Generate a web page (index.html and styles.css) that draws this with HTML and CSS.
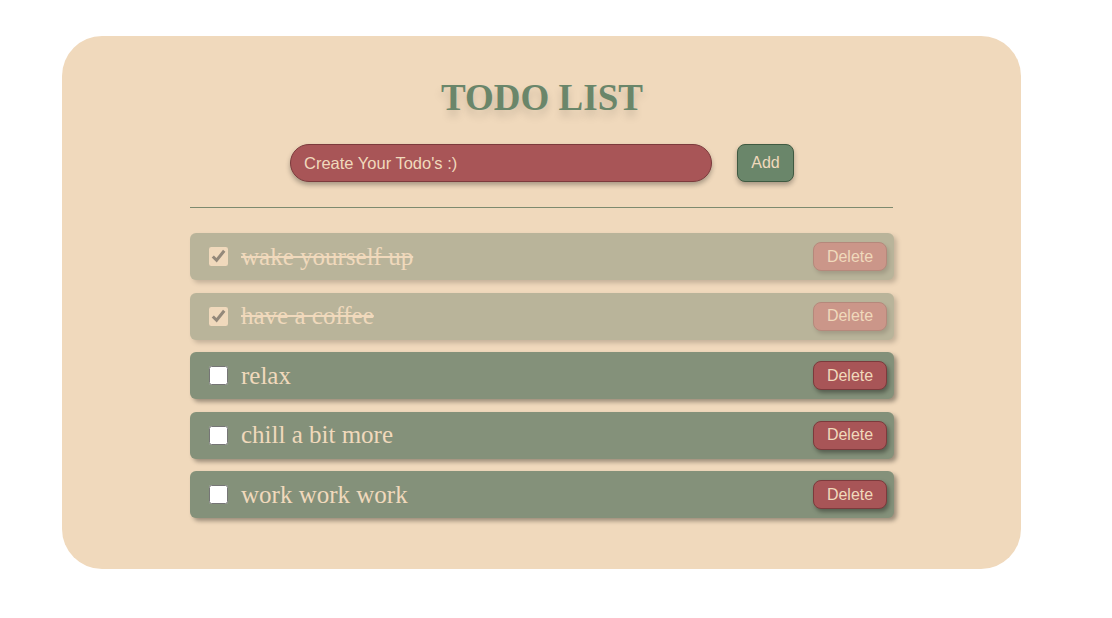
FILE: index.html
```html
<!DOCTYPE html>
<html>
<head>
<meta charset="utf-8">
<link rel="stylesheet" href="styles.css">
</head>
<body>
<div class="card">
  <h1 class="title">TODO LIST</h1>
  <form class="form">
    <input class="input" type="text" placeholder="Create Your Todo's :)">
    <button class="add" type="button">Add</button>
  </form>
  <hr class="divider">
  <ul class="list">
    <li class="item done"><input class="check" type="checkbox" checked><span class="text">wake yourself up</span><button class="del" type="button">Delete</button></li>
    <li class="item done"><input class="check" type="checkbox" checked><span class="text">have a coffee</span><button class="del" type="button">Delete</button></li>
    <li class="item"><input class="check" type="checkbox"><span class="text">relax</span><button class="del" type="button">Delete</button></li>
    <li class="item"><input class="check" type="checkbox"><span class="text">chill a bit more</span><button class="del" type="button">Delete</button></li>
    <li class="item"><input class="check" type="checkbox"><span class="text">work work work</span><button class="del" type="button">Delete</button></li>
  </ul>
</div>
</body>
</html>
```
FILE: styles.css
```css
html, body {
  margin: 0;
  padding: 0;
  background: #ffffff;
}
body {
  padding: 36px 0 0 62px;
  font-family: "Liberation Serif", "Times New Roman", serif;
}
.card {
  width: 959px;
  height: 533px;
  box-sizing: border-box;
  background: #f0d9bc;
  border-radius: 40px;
  padding: 40px 127px 0 128px;
  display: flex;
  flex-direction: column;
  align-items: center;
}
.title {
  margin: 0;
  font-size: 37px;
  line-height: 44px;
  font-weight: bold;
  color: #6a866a;
  text-shadow: 0 6px 8px rgba(0, 0, 0, 0.15);
}
.form {
  margin: 24px 0 0;
  display: flex;
  gap: 25px;
  align-items: center;
}
.input {
  width: 422px;
  height: 38px;
  box-sizing: border-box;
  background: #a85557;
  border: 1px solid #7c3a3c;
  border-radius: 19px;
  padding: 0 13px;
  font-family: "Liberation Sans", Arial, sans-serif;
  font-size: 16.5px;
  color: #f0d9bc;
  box-shadow: 0 3px 5px rgba(0, 0, 0, 0.3);
  outline: none;
}
.input::placeholder {
  color: #f0d9bc;
  opacity: 1;
}
.add {
  width: 57px;
  height: 38px;
  box-sizing: border-box;
  background: #6a866a;
  border: 1px solid #3f5a41;
  border-radius: 8px;
  font-family: "Liberation Sans", Arial, sans-serif;
  font-size: 16px;
  color: #f0d9bc;
  box-shadow: 0 3px 5px rgba(0, 0, 0, 0.3);
  padding: 0;
}
.divider {
  align-self: stretch;
  margin: 25px 1px 0 0;
  border: 0;
  height: 1px;
  background: #7d8a6e;
}
.list {
  align-self: stretch;
  list-style: none;
  margin: 25px 0 0;
  padding: 0;
  display: flex;
  flex-direction: column;
  gap: 12.5px;
}
.item {
  height: 47px;
  display: flex;
  align-items: center;
  padding: 0 7px 0 19px;
  background: #84917a;
  border-radius: 6px;
  box-shadow: 3px 3px 4px rgba(0, 0, 0, 0.35);
}
.item.done {
  opacity: 0.5;
}
.check {
  width: 19px;
  height: 19px;
  margin: 0 13px 0 0;
  accent-color: #f0d9bc;
}
.text {
  flex: 1;
  font-size: 25px;
  color: #f0d9bc;
}
.done .text {
  text-decoration: line-through;
}
.del {
  width: 74px;
  height: 29px;
  box-sizing: border-box;
  background: #a85557;
  border: 1px solid #7c3a3c;
  border-radius: 8px;
  font-family: "Liberation Sans", Arial, sans-serif;
  font-size: 16px;
  color: #f0d9bc;
  padding: 0;
  box-shadow: 2px 3px 4px rgba(0, 0, 0, 0.35);
}
```
